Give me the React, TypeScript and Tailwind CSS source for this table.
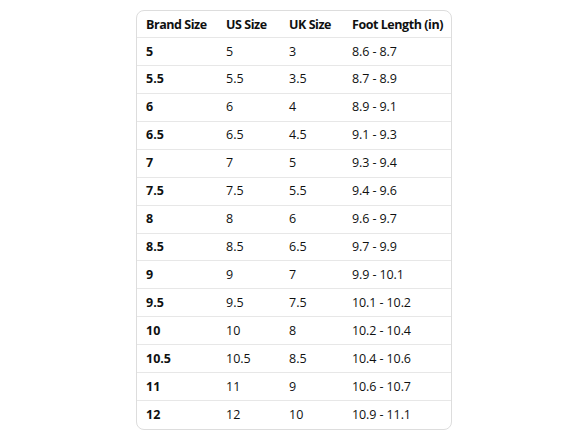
import React from "react";

const rows = [
  ["5", "5", "3", "8.6 - 8.7"],
  ["5.5", "5.5", "3.5", "8.7 - 8.9"],
  ["6", "6", "4", "8.9 - 9.1"],
  ["6.5", "6.5", "4.5", "9.1 - 9.3"],
  ["7", "7", "5", "9.3 - 9.4"],
  ["7.5", "7.5", "5.5", "9.4 - 9.6"],
  ["8", "8", "6", "9.6 - 9.7"],
  ["8.5", "8.5", "6.5", "9.7 - 9.9"],
  ["9", "9", "7", "9.9 - 10.1"],
  ["9.5", "9.5", "7.5", "10.1 - 10.2"],
  ["10", "10", "8", "10.2 - 10.4"],
  ["10.5", "10.5", "8.5", "10.4 - 10.6"],
  ["11", "11", "9", "10.6 - 10.7"],
  ["12", "12", "10", "10.9 - 11.1"],
];

export default function App() {
  return (
    <div className="w-[588px] h-[441px] bg-white flex justify-center pt-[10px]" style={{ fontFamily: '"Open Sans", "Noto Sans", sans-serif' }}>
      <div className="w-[316px] h-[420px] border border-[#dddddd] rounded-[8px] flex flex-col text-[12.5px] text-[#0f1111]">
        <div className="h-[27px] pt-[2px] flex items-center border-b border-[#e7e7e7] font-bold tracking-[-0.45px] whitespace-nowrap">
          <div className="w-[80px] pl-[9px]">Brand Size</div>
          <div className="w-[63px] pl-[9px]">US Size</div>
          <div className="w-[63px] pl-[9px]">UK Size</div>
          <div className="flex-1 pl-[9px]">Foot Length (in)</div>
        </div>
        {rows.map((r, i) => (
          <div key={i} className={"h-[28px] pt-[1px] flex items-center whitespace-nowrap " + (i < rows.length - 1 ? "border-b border-[#e7e7e7]" : "")}>
            <div className="w-[80px] pl-[9px] font-bold">{r[0]}</div>
            <div className="w-[63px] pl-[9px]">{r[1]}</div>
            <div className="w-[63px] pl-[9px]">{r[2]}</div>
            <div className="flex-1 pl-[9px] tracking-[-0.1px]">{r[3]}</div>
          </div>
        ))}
      </div>
    </div>
  );
}
